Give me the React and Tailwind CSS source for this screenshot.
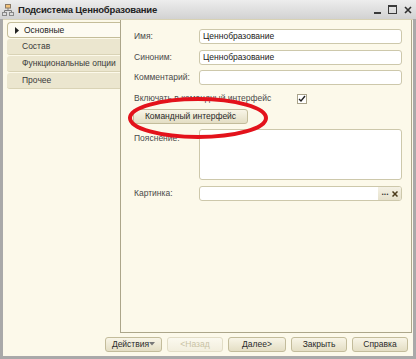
import React from 'react';

function SubsystemIcon() {
  return (
    <svg width="12" height="12" viewBox="0 0 12 12" className="shrink-0">
      <path d="M6 4v2.5M2.5 6.5h7M2.5 6.5v2M9.5 6.5v2" stroke="#7a7a7a" strokeWidth="1" fill="none" />
      <rect x="3.5" y="0.5" width="5" height="3.5" fill="#f2c27a" stroke="#8a7a66" />
      <rect x="0.5" y="8.5" width="4" height="3" fill="#dcdcdc" stroke="#8a8a8a" />
      <rect x="7.5" y="8.5" width="4" height="3" fill="#dcdcdc" stroke="#8a8a8a" />
    </svg>
  );
}

function WindowControls() {
  return (
    <div className="ml-auto flex items-center gap-[7px] pr-[4px]">
      <svg width="7" height="10" viewBox="0 0 7 10">
        <rect x="0" y="7" width="7" height="2" fill="#3a3a3a" />
      </svg>
      <svg width="9" height="9" viewBox="0 0 9 9">
        <rect x="0.5" y="0.5" width="8" height="8" fill="none" stroke="#3a3a3a" />
        <rect x="0" y="0" width="9" height="2" fill="#3a3a3a" />
      </svg>
      <svg width="8" height="8" viewBox="0 0 8 8">
        <path d="M1 1l6 6M7 1l-6 6" stroke="#2f2f2f" strokeWidth="1.6" />
      </svg>
    </div>
  );
}

const tabs = ['Основные', 'Состав', 'Функциональные опции', 'Прочее'];

function TabList() {
  return (
    <div className="w-[113px] shrink-0 pt-[2px] flex flex-col">
      {tabs.map((t, i) =>
        i === 0 ? (
          <div
            key={t}
            className="h-[16px] flex items-center pl-[7px] bg-[#fdfbf2] border border-r-0 border-[#c4bd9a] rounded-l-[4px] text-[#222]"
          >
            <svg width="4" height="7" viewBox="0 0 4 7" className="mr-[5px]">
              <path d="M0 0l4 3.5L0 7z" fill="#222" />
            </svg>
            {t}
          </div>
        ) : (
          <div
            key={t}
            className="h-[16px] mt-[1px] flex items-center pl-[15px] bg-[#ebe6cf] border-b border-[#d9d3b6] rounded-l-[3px] text-[#3a3a3a]"
          >
            {t}
          </div>
        )
      )}
    </div>
  );
}

function Field({ value, className = '' }) {
  return (
    <div
      className={`w-[203px] h-[15px] flex items-center px-[3px] bg-white border border-[#cdc8ab] rounded-[3px] text-[#1a1a1a] ${className}`}
    >
      {value}
    </div>
  );
}

function Row({ label, children, className = '' }) {
  return (
    <div className={`flex items-center ${className}`}>
      <span className="w-[65px] shrink-0 text-[#4a4a4a]">{label}</span>
      {children}
    </div>
  );
}

function Button({ children, disabled, className = '' }) {
  return (
    <div
      className={`h-[15px] flex items-center justify-center rounded-[3px] border bg-gradient-to-b ${
        disabled
          ? 'border-[#e2ddc6] from-[#fbf9ef] to-[#f2eedd] text-[#c9c2a4]'
          : 'border-[#c3bc9b] from-[#f8f5e7] to-[#e4dec4] text-[#2a2a2a]'
      } ${className}`}
    >
      {children}
    </div>
  );
}

export default function App() {
  return (
    <div className="relative w-[416px] h-[359px] flex flex-col bg-[#a9a9a9] font-['Liberation_Sans',Arial,sans-serif] text-[8.5px] leading-none">
      {/* title bar */}
      <div className="h-[19px] flex items-center pl-[2px] bg-gradient-to-b from-[#ededed] to-[#d2d2d2]">
        <SubsystemIcon />
        <span className="ml-[4px] font-bold text-[9.5px] tracking-[-0.2px] text-[#222]">Подсистема Ценнобразование</span>
        <WindowControls />
      </div>

      {/* body */}
      <div className="flex-1 mx-[3px] mb-[3px] flex flex-col bg-[#fcf9ea] border-t border-[#d8d2b4]">
        <div className="flex-1 flex pl-[4px] pr-[1px]">
          <TabList />
          <div className="flex-1 flex flex-col pl-[13px] pt-[9px] border-l border-r border-b border-[#aca68a]">
            <Row label="Имя:">
              <Field value="Ценнобразование" />
            </Row>
            <Row label="Синоним:" className="mt-[6px]">
              <Field value="Ценнобразование" />
            </Row>
            <Row label="Комментарий:" className="mt-[5px]">
              <Field value="" />
            </Row>
            <div className="mt-[8px] h-[11px] flex items-center">
              <span className="w-[163px] text-[#4a4a4a]">Включать в командный интерфейс</span>
              <div className="w-[10px] h-[10px] bg-white border border-[#a9a38a] flex items-center justify-center">
                <svg width="8" height="8" viewBox="0 0 8 8">
                  <path d="M1 4l2 2 4-5" stroke="#222" strokeWidth="1.4" fill="none" />
                </svg>
              </div>
            </div>
            <Button className="mt-[5px] w-[115px] -ml-[1px]">Командный интерфейс</Button>
            <div className="mt-[5px] flex items-start">
              <span className="w-[65px] shrink-0 pt-[5px] text-[#4a4a4a]">Пояснение:</span>
              <div className="w-[203px] h-[51px] bg-white border border-[#cdc8ab] rounded-[3px]" />
            </div>
            <Row label="Картинка:" className="mt-[6px]">
              <div className="w-[203px] h-[15px] flex bg-white border border-[#cdc8ab] rounded-[3px] overflow-hidden">
                <div className="flex-1" />
                <div className="w-[23px] flex items-center justify-center gap-[3px] bg-gradient-to-b from-[#f4f1e4] to-[#e6e1cc] text-[#333] font-bold">
                  <span className="pb-[2px]">...</span>
                  <svg width="6" height="6" viewBox="0 0 6 6">
                    <path d="M0.5 0.5l5 5M5.5 0.5l-5 5" stroke="#4a3a1a" strokeWidth="1.5" />
                  </svg>
                </div>
              </div>
            </Row>
          </div>
        </div>

        {/* bottom buttons */}
        <div className="h-[23px] flex items-center justify-end gap-[5px] pr-[5px] pb-[1px]">
          <Button className="w-[57px] justify-between px-[4px]">
            <span>Действия</span>
            <svg width="6" height="4" viewBox="0 0 6 4">
              <path d="M0 0h6L3 3.5z" fill="#777" />
            </svg>
          </Button>
          <Button disabled className="w-[56px]">&lt;Назад</Button>
          <Button className="w-[58px]">Далее&gt;</Button>
          <Button className="w-[56px]">Закрыть</Button>
          <Button className="w-[56px]">Справка</Button>
        </div>
      </div>

      {/* red annotation ellipse */}
      <svg className="absolute left-[126px] top-[95px] pointer-events-none" width="144" height="46" viewBox="0 0 144 46">
        <ellipse cx="72" cy="23" rx="68" ry="19" fill="none" stroke="#e3121b" strokeWidth="4" />
      </svg>
    </div>
  );
}
